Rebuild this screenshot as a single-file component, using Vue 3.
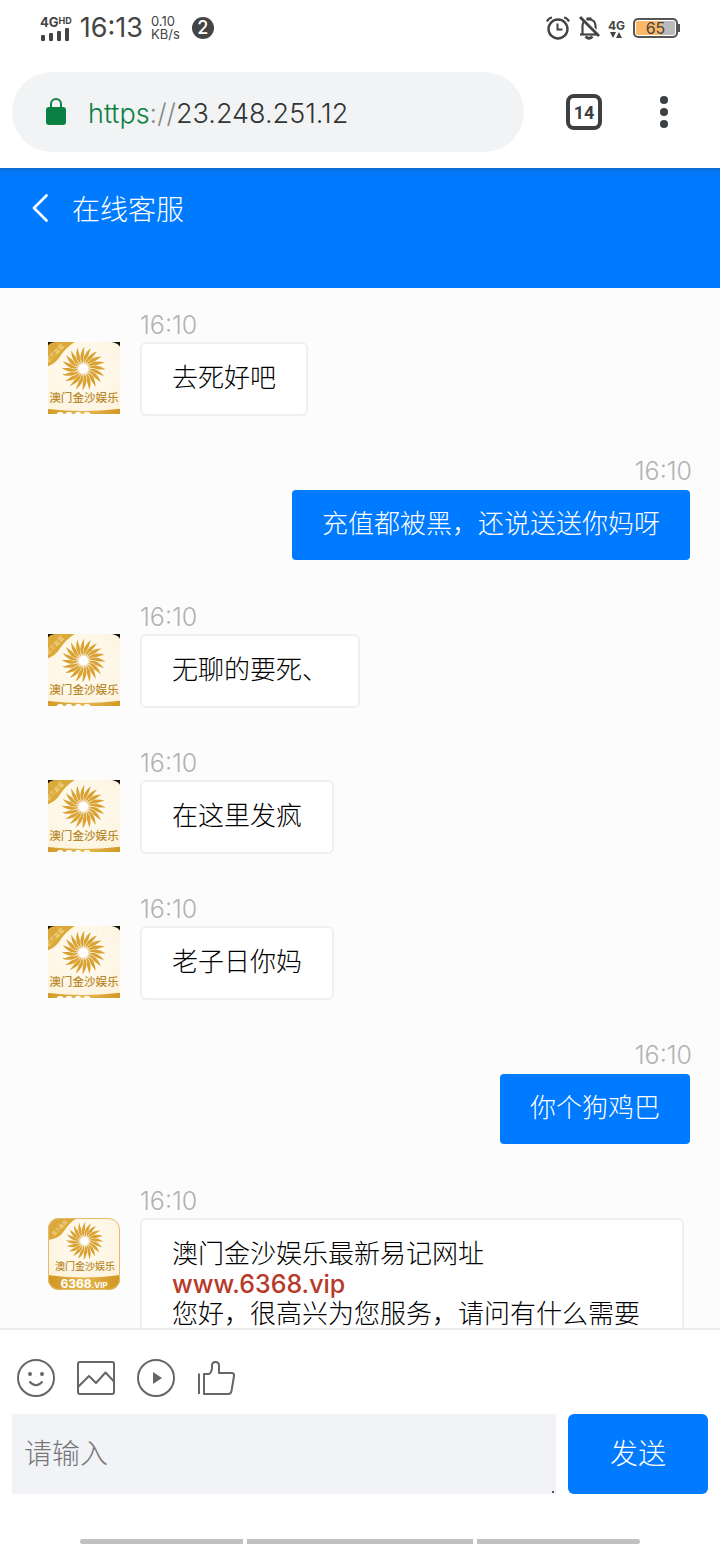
<template>
  <div class="page">
    <svg class="defs" aria-hidden="true">
      <defs>
        <linearGradient id="band" x1="0" x2="1" y1="0" y2="0">
          <stop offset="0" stop-color="#cf951f" />
          <stop offset="0.5" stop-color="#e6b850" />
          <stop offset="1" stop-color="#cf951f" />
        </linearGradient>
        <radialGradient id="card" cx="0.5" cy="0.35" r="0.7">
          <stop offset="0" stop-color="#fffdf6" />
          <stop offset="1" stop-color="#fdf1d8" />
        </radialGradient>
        <radialGradient id="glow">
          <stop offset="0.4" stop-color="#fff" />
          <stop offset="1" stop-color="#fff" stop-opacity="0" />
        </radialGradient>
        <clipPath id="cardClip"><rect width="72" height="72" rx="11" /></clipPath>
      </defs>
    </svg>

    <div class="status-bar">
      <div class="status-left">
        <div class="signal">
          <div class="network">4G<span>HD</span></div>
          <svg width="30" height="13" viewBox="0 0 30 13" fill="#444">
            <rect x="1" y="7" width="4" height="6" rx="1" />
            <rect x="9" y="5" width="4" height="8" rx="1" />
            <rect x="17" y="3" width="4" height="10" rx="1" />
            <rect x="25" y="0" width="4" height="13" rx="1" />
          </svg>
        </div>
        <span class="clock">16:13</span>
        <div class="speed"><span>0.10</span><span>KB/s</span></div>
        <span class="notices">2</span>
      </div>
      <div class="status-right">
        <svg width="24" height="24" viewBox="0 0 24 24" fill="none" stroke="#444" stroke-width="2">
          <circle cx="12" cy="13" r="9.5" stroke-width="2.4" />
          <path d="M11.5 7.500v6h5" />
          <path d="M1 5.500Q2.500 2 6 1.500M23 5.500Q21.500 2 18 1.500" stroke-width="2.2" />
        </svg>
        <svg width="22" height="24" viewBox="0 0 22 24" fill="none" stroke="#444" stroke-width="2.2">
          <path d="M2 18.500h18" />
          <path d="M4.500 18V9.500Q5 3.500 11 3.500T17.500 9.500V18" />
          <path d="M8.500 2.500h5" />
          <path d="M7.500 20.500Q11 24 14.500 20.500" stroke-width="2.6" />
          <path d="M3.500 .5L22 18.500" stroke="#fff" stroke-width="2" />
          <path d="M2 1L21 20" stroke-width="2.8" />
        </svg>
        <div class="data">
          <span>4G</span>
          <svg width="12" height="6" viewBox="0 0 12 6" fill="#444">
            <path d="M0 0h6L3 6zM6 6h6L9 0z" />
          </svg>
        </div>
        <div class="battery"><span>65</span></div>
      </div>
    </div>

    <div class="browser-bar">
      <div class="address">
        <svg width="20" height="28" viewBox="0 0 20 28">
          <rect x="0" y="9" width="20" height="18" rx="3" fill="#0b8043" />
          <path d="M5 10V6a5 5 0 0 1 10 0v4" fill="none" stroke="#0b8043" stroke-width="2" />
        </svg>
        <span class="url"><span class="scheme">https</span><span class="slashes">://</span>23.248.251.12</span>
      </div>
      <button class="tabs" aria-label="标签页">14</button>
      <button class="more" aria-label="更多">
        <svg width="8" height="32" viewBox="0 0 8 32" fill="#3c4043">
          <circle cx="4" cy="4" r="4" /><circle cx="4" cy="16" r="4" /><circle cx="4" cy="28" r="4" />
        </svg>
      </button>
    </div>

    <header class="header">
      <button class="back" aria-label="返回">
        <svg width="16" height="28" viewBox="0 0 16 28" fill="none" stroke="#fff" stroke-width="2.6" stroke-linecap="round" stroke-linejoin="round">
          <path d="M14.500 1.500L2 14l12.500 12.500" />
        </svg>
      </button>
      <h1>在线客服</h1>
    </header>

    <main class="chat">
      <div v-for="(msg, index) in messages" :key="index" class="message" :class="{ mine: msg.mine }">
        <svg v-if="!msg.mine" class="avatar" :viewBox="msg.rounded ? '0 0 72 72' : '6 0 62 62'">
          <g clip-path="url(#cardClip)">
            <rect width="72" height="72" fill="url(#card)" />
            <path d="M0 0H29Q21 5 16 13T0 22z" fill="#dba83a" />
            <text class="ribbon" x="6" y="18" transform="rotate(-45 6 18)">官方直营</text>
            <g transform="translate(36.500 23)">
              <path v-for="n in 20" :key="n" :transform="`rotate(${n * 18})`" :d="ray" fill="#d9a232" />
              <circle r="7" fill="url(#glow)" />
            </g>
            <text class="brand" x="37" y="52">澳门金沙娱乐</text>
            <path d="M0 57Q36 62 72 57V72H0z" fill="url(#band)" />
            <text class="site" x="36" y="70">6368<tspan class="vip">.VIP</tspan></text>
          </g>
          <rect v-if="msg.rounded" x="0.5" y="0.5" width="71" height="71" rx="11" fill="none" stroke="#e3bd68" />
          <path v-else d="M6 0h6Q7.500 .5 6 3zM61 0h7v4Q66 1 61 0z" fill="#16120a" />
        </svg>
        <div class="body">
          <time>{{ msg.time }}</time>
          <div class="bubble" :class="{ wide: msg.link }">
            <p v-for="line in msg.lines" :key="line">{{ line }}</p>
            <template v-if="msg.link">
              <a :href="'http://' + msg.link">{{ msg.link }}</a>
              <p>{{ msg.after }}</p>
            </template>
          </div>
        </div>
      </div>
    </main>

    <footer class="composer">
      <div class="tools">
        <button aria-label="表情">
          <svg viewBox="0 0 40 40">
            <circle cx="20" cy="20" r="18" />
            <circle cx="14" cy="16" r="2" class="solid" /><circle cx="26" cy="16" r="2" class="solid" />
            <path d="M13.500 23.500Q20 31 26.500 23.500" />
          </svg>
        </button>
        <button aria-label="图片">
          <svg viewBox="0 0 40 40">
            <rect x="2" y="4" width="36" height="32" rx="2" />
            <path d="M2 29L13 18l7 7L29.500 14.500l8 8.500" />
          </svg>
        </button>
        <button aria-label="视频">
          <svg viewBox="0 0 40 40">
            <circle cx="20" cy="20" r="18" />
            <path d="M17 14l9 6-9 6z" class="solid" />
          </svg>
        </button>
        <button aria-label="点赞">
          <svg viewBox="0 0 40 40">
            <path d="M3 15.500V36" />
            <path d="M8 36V16h5Q16 14 16 9V7.500Q16 4 19.500 4T23 8v7h12.500Q38.500 15 38 18l-2.500 15Q35 36 32 36z" />
          </svg>
        </button>
      </div>
      <form class="send-row" @submit.prevent="send">
        <div class="field">
          <textarea v-model="draft" placeholder="请输入" aria-label="请输入"></textarea>
        </div>
        <button type="submit" class="send">发送</button>
      </form>
      <div class="gestures"><i></i><i></i><i></i></div>
    </footer>
  </div>
</template>

<script setup>
import { ref } from 'vue'

const ray = 'M-.5 -4C-3.500 -7 -3.700 -13 .8 -19C.2 -14 1.200 -12 -.3 -9Q-1 -7 .4 -4z'

const draft = ref('')
const messages = ref([
  { time: '16:10', lines: ['去死好吧'] },
  { time: '16:10', lines: ['充值都被黑，还说送送你妈呀'], mine: true },
  { time: '16:10', lines: ['无聊的要死、'] },
  { time: '16:10', lines: ['在这里发疯'] },
  { time: '16:10', lines: ['老子日你妈'] },
  { time: '16:10', lines: ['你个狗鸡巴'], mine: true },
  {
    time: '16:10',
    lines: ['澳门金沙娱乐最新易记网址'],
    link: 'www.6368.vip',
    after: '您好，很高兴为您服务，请问有什么需要',
    rounded: true
  }
])

function send() {
  if (draft.value.trim()) {
    messages.value.push({ time: '16:10', lines: [draft.value], mine: true })
    draft.value = ''
  }
}
</script>

<style>
body {
  margin: 0;
}
</style>

<style scoped>
.page {
  display: flex;
  flex-direction: column;
  height: 100vh;
  background: #fff;
  font-family: Inter, "Noto Sans CJK SC", sans-serif;
  font-weight: 300;
}
.defs {
  position: absolute;
  width: 0;
  height: 0;
}
button {
  padding: 0;
  border: none;
  background: none;
  font: inherit;
  cursor: pointer;
}
svg {
  display: block;
}
.status-bar {
  display: flex;
  justify-content: space-between;
  align-items: center;
  height: 56px;
  padding: 0 42px 0 40px;
  color: #444;
  font-weight: 400;
}
.status-left,
.status-right {
  display: flex;
  align-items: center;
  gap: 8px;
}
.network {
  font-size: 13px;
  line-height: 12px;
  font-weight: 700;
}
.network span {
  font-size: 9px;
  vertical-align: top;
  line-height: 9px;
}
.clock {
  font-size: 27px;
  line-height: 32px;
}
.speed {
  display: flex;
  flex-direction: column;
  font-size: 13px;
  line-height: 13px;
}
.notices {
  width: 22px;
  margin-left: 4px;
  border-radius: 50%;
  background: #444;
  color: #fff;
  font-size: 18px;
  line-height: 22px;
  font-weight: 500;
  text-align: center;
}
.data {
  display: flex;
  flex-direction: column;
  align-items: center;
  font-size: 12px;
  line-height: 13px;
  font-weight: 700;
}
.battery {
  position: relative;
  box-sizing: border-box;
  width: 45px;
  height: 20px;
  border: 2px solid #555;
  border-radius: 5px;
  background: linear-gradient(90deg, #fdb768 65%, #bbb 65%);
  box-shadow: inset 0 0 0 1px #fff;
  font-size: 16px;
  line-height: 16px;
  text-align: center;
}
.battery::after {
  content: "";
  position: absolute;
  top: 4px;
  right: -4px;
  width: 2px;
  height: 8px;
  background: #555;
}
.browser-bar {
  display: flex;
  align-items: center;
  padding: 16px 12px;
}
.address {
  display: flex;
  flex: 1;
  align-items: center;
  gap: 22px;
  height: 80px;
  padding-left: 34px;
  border-radius: 40px;
  background: #f1f3f4;
}
.url {
  padding-top: 4px;
  color: #333;
  font-size: 27px;
  font-weight: 350;
  line-height: 32px;
}
.scheme {
  color: #0b8043;
}
.slashes {
  color: #888;
}
.tabs {
  box-sizing: border-box;
  width: 36px;
  height: 36px;
  margin: 0 42px;
  border: 4px solid #3c4043;
  border-radius: 8px;
  color: #3c4043;
  font-family: Roboto, sans-serif;
  font-size: 18px;
  font-weight: 700;
}
.more {
  padding: 0 40px 0 16px;
}
.header {
  display: flex;
  align-items: flex-start;
  gap: 24px;
  box-sizing: border-box;
  height: 120px;
  padding: 20px 32px;
  background: linear-gradient(#1068c8, #0673e6 2px, #007aff 8px);
  color: #fff;
}
.back {
  padding: 6px 0;
}
h1 {
  margin: 0;
  padding-top: 2px;
  font-size: 28px;
  line-height: 40px;
  font-weight: 300;
}
.chat {
  flex: 1;
  min-height: 0;
  padding: 20px 28px 0 48px;
  overflow: hidden;
  background: #fcfcfc;
}
.message {
  display: flex;
  gap: 20px;
  margin-bottom: 38px;
}
.avatar {
  flex: none;
  width: 72px;
  height: 72px;
  margin-top: 34px;
}
.ribbon {
  fill: #fff3cf;
  font-size: 5px;
}
.brand {
  fill: #b98a2c;
  font-family: "Liberation Serif", "Noto Sans CJK SC", serif;
  font-size: 10px;
  font-weight: 500;
  text-anchor: middle;
}
.site {
  fill: #fff;
  font-size: 12px;
  font-weight: 700;
  text-anchor: middle;
}
.vip {
  font-size: 8px;
}
.body {
  display: flex;
  flex: 1;
  flex-direction: column;
  align-items: flex-start;
  margin-right: 8px;
}
.mine .body {
  align-items: flex-end;
  margin-right: 0;
}
time {
  color: #b2b2b2;
  font-size: 25px;
  font-weight: 350;
  line-height: 34px;
}
.bubble {
  padding: 19px 30px 21px;
  border: 2px solid #efefef;
  border-radius: 6px;
  background: #fff;
  color: #000;
  font-size: 26px;
  line-height: 30px;
}
.wide {
  align-self: stretch;
}
.mine .bubble {
  border-color: transparent;
  background: #007aff;
  background-clip: padding-box;
  color: #fff;
}
.bubble p {
  margin: 0;
}
.bubble a {
  display: block;
  color: #b8392b;
  font-size: 25px;
  font-weight: 500;
  text-decoration: none;
}
.composer {
  border-top: 2px solid #ececec;
}
.tools {
  display: flex;
  gap: 20px;
  padding: 28px 16px 16px;
}
.tools svg {
  width: 40px;
  height: 40px;
  fill: none;
  stroke: #666;
  stroke-width: 2;
  stroke-linejoin: round;
}
.tools .solid {
  fill: #666;
  stroke: none;
}
.send-row {
  display: flex;
  gap: 12px;
  padding: 0 12px 45px;
}
.field {
  position: relative;
  flex: 1;
}
.field::after {
  content: "";
  position: absolute;
  right: 2px;
  bottom: 1px;
  width: 2px;
  height: 2px;
  background: #555;
}
textarea {
  display: block;
  box-sizing: border-box;
  width: 100%;
  height: 80px;
  padding: 20px 12px;
  border: none;
  background: #f2f3f7;
  font: inherit;
  font-size: 28px;
  line-height: 40px;
  resize: none;
}
textarea::placeholder {
  color: #777;
}
.send {
  width: 140px;
  height: 80px;
  padding-bottom: 4px;
  border-radius: 6px;
  background: #007aff;
  color: #fff;
  font-size: 28px;
}
.gestures {
  display: flex;
  gap: 4px;
  padding: 0 80px;
}
.gestures i {
  flex: 163;
  height: 5px;
  background: #c1c1c1;
}
.gestures i:nth-child(2) {
  flex: 226;
}
.gestures i:first-child {
  border-radius: 3px 0 0 3px;
}
.gestures i:last-child {
  border-radius: 0 3px 3px 0;
}
</style>
